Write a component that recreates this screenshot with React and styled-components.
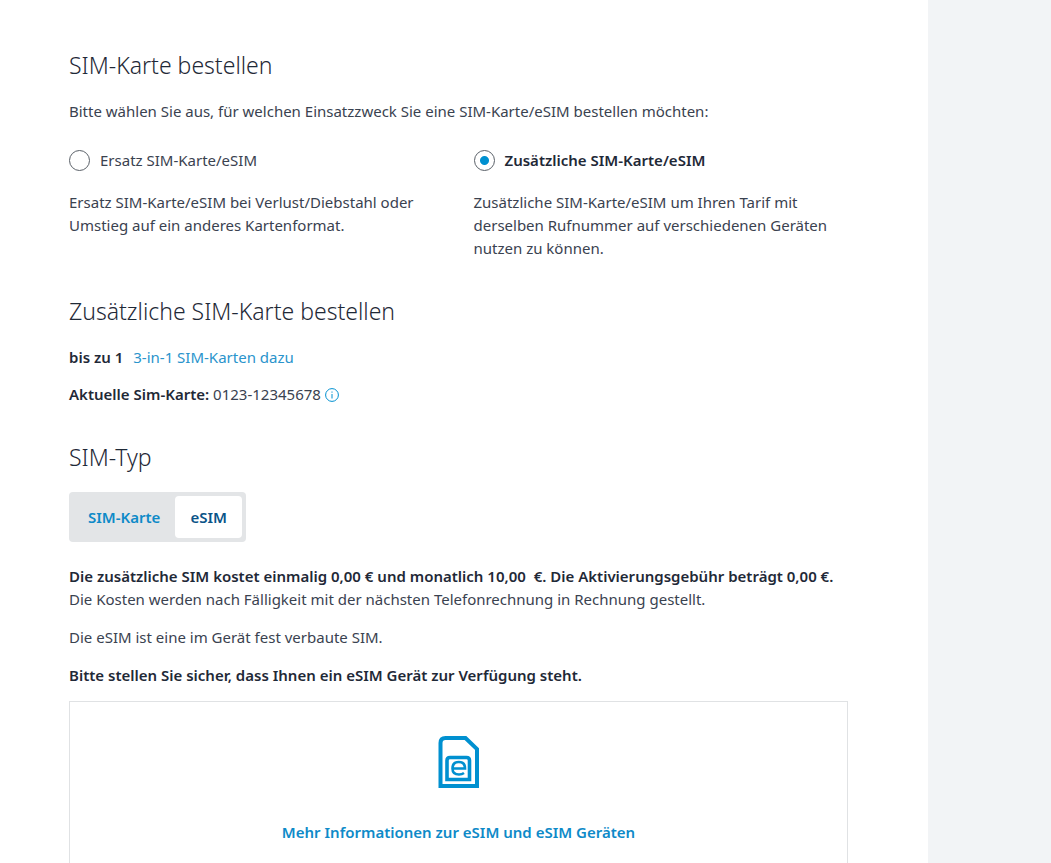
import React, { useState } from 'react';
import styled, { createGlobalStyle } from 'styled-components';

export default function App() {
    const [purpose, setPurpose] = useState('additional');
    const [simType, setSimType] = useState('esim');

    return (
        <Page>
            <GlobalStyle />
            <Main>
                <Section>
                    <Title>SIM-Karte bestellen</Title>
                    <Text>Bitte wählen Sie aus, für welchen Einsatzzweck Sie eine SIM-Karte/eSIM bestellen möchten:</Text>
                    <Options>
                        {purposes.map(({ id, label, description }) => (
                            <div key={id}>
                                <RadioLabel $checked={purpose === id}>
                                    <Radio
                                        name='purpose'
                                        checked={purpose === id}
                                        onChange={() => setPurpose(id)}
                                    />
                                    {label}
                                </RadioLabel>
                                <Text>{description}</Text>
                            </div>
                        ))}
                    </Options>
                </Section>

                <Section>
                    <Title>Zusätzliche SIM-Karte bestellen</Title>
                    <SimLine>
                        <b>bis zu 1</b>
                        <a href='#sim-karten'>3-in-1 SIM-Karten dazu</a>
                    </SimLine>
                    <CurrentSim>
                        <span><b>Aktuelle Sim-Karte:</b> 0123-12345678</span>
                        <InfoButton type='button' aria-label='Information'>
                            <InfoIcon />
                        </InfoButton>
                    </CurrentSim>
                </Section>

                <Title>SIM-Typ</Title>
                <Toggle>
                    <ToggleButton type='button' $active={simType === 'sim'} onClick={() => setSimType('sim')}>
                        SIM-Karte
                    </ToggleButton>
                    <ToggleButton type='button' $active={simType === 'esim'} onClick={() => setSimType('esim')}>
                        eSIM
                    </ToggleButton>
                </Toggle>

                <Costs>
                    <Text>
                        <b>Die zusätzliche SIM kostet einmalig 0,00 € und monatlich 10,00 &nbsp;€. Die Aktivierungsgebühr beträgt 0,00 €.</b>
                        <br />
                        Die Kosten werden nach Fälligkeit mit der nächsten Telefonrechnung in Rechnung gestellt.
                    </Text>
                    <Text>Die eSIM ist eine im Gerät fest verbaute SIM.</Text>
                    <Text><b>Bitte stellen Sie sicher, dass Ihnen ein eSIM Gerät zur Verfügung steht.</b></Text>
                </Costs>

                <InfoCard>
                    <EsimIcon />
                    <CardLink href='#esim'>Mehr Informationen zur eSIM und eSIM Geräten</CardLink>
                </InfoCard>
            </Main>
        </Page>
    );
}

const purposes = [
    {
        id: 'replacement',
        label: 'Ersatz SIM-Karte/eSIM',
        description: 'Ersatz SIM-Karte/eSIM bei Verlust/Diebstahl oder Umstieg auf ein anderes Kartenformat.',
    },
    {
        id: 'additional',
        label: 'Zusätzliche SIM-Karte/eSIM',
        description: 'Zusätzliche SIM-Karte/eSIM um Ihren Tarif mit derselben Rufnummer auf verschiedenen Geräten nutzen zu können.',
    },
];

function InfoIcon() {
    return (
        <svg width='14' height='14' viewBox='0 0 14 14' fill='none' stroke='#0090D0'>
            <circle cx='7' cy='7' r='6.4' />
            <path d='M7 6v4.5M7 3.5v1.2' />
        </svg>
    );
}

function EsimIcon() {
    return (
        <svg width='42' height='54' viewBox='0 0 42 54' fill='none' stroke='#0090D0' strokeWidth='4'>
            <path d='M2.500 51V8q0-5 5-5h20l11.500 11v37z' />
            <path d='M9 44.500V25.500q0-3 3-3h16.500q3 0 3 3v19z' strokeWidth='3.600' />
            <path d='M14.500 33.500h12.500q0-6.500-6.200-6.500t-6.300 6.500q0 6 6.500 6 3 0 5-1.500' strokeWidth='2.600' />
        </svg>
    );
}

const GlobalStyle = createGlobalStyle`
    * { box-sizing: border-box; }

    body {
        margin: 0;
        background-color: #F2F4F6;
        color: #3A4250;
        font-family: 'Noto Sans', 'Open Sans', sans-serif;
        font-size: 15px;
        font-weight: 400;
        line-height: 23px;
    }

    a {
        color: #2A94CC;
        text-decoration: none;
    }

    b {
        color: #1F2937;
        font-weight: 600;
    }
`;

const Page = styled.div`
    display: flex;
    min-height: 100vh;
    padding-right: 123px;

    @media (max-width: 800px) { padding-right: 0; }
`;

const Main = styled.main`
    flex: 1;
    display: flex;
    flex-direction: column;
    padding: 48px 80px 0 69px;
    background-color: #FFF;

    @media (max-width: 800px) { padding: 24px 20px 0; }
`;

const Section = styled.section`
    margin-bottom: 34px;
`;

const Title = styled.h2`
    margin: 0 0 18px;
    color: #1F2937;
    font-size: 23px;
    font-weight: 300;
    line-height: 34px;
`;

const Text = styled.p`
    margin: 0;
`;

const Options = styled.div`
    display: grid;
    grid-template-columns: 1fr 1fr;
    gap: 30px;
    margin-top: 26px;

    @media (max-width: 600px) { grid-template-columns: 1fr; }
`;

const RadioLabel = styled.label`
    display: flex;
    align-items: center;
    gap: 10px;
    margin-bottom: 19px;
    color: ${({ $checked }) => $checked ? '#1F2937' : 'inherit'};
    font-weight: ${({ $checked }) => $checked ? 600 : 400};
    cursor: pointer;
`;

const Radio = styled.input.attrs({ type: 'radio' })`
    appearance: none;
    width: 21px;
    height: 21px;
    margin: 0;
    border: 1px solid #5A6068;
    border-radius: 50%;
    background-color: #FFF;

    &:checked { background-image: radial-gradient(circle, #0090D0 4px, transparent 5px); }
`;

const SimLine = styled.div`
    display: flex;
    gap: 10px;
    margin-bottom: 14px;
`;

const CurrentSim = styled.div`
    display: flex;
    align-items: center;
    gap: 4px;
`;

const InfoButton = styled.button`
    display: flex;
    padding: 0;
    border: none;
    background: none;
    cursor: pointer;
`;

const Toggle = styled.div`
    display: flex;
    align-self: flex-start;
    height: 50px;
    padding: 4px;
    border-radius: 4px;
    background-color: #E3E5E7;
`;

const ToggleButton = styled.button`
    padding: 0 15px;
    border: none;
    border-radius: 4px;
    background-color: ${({ $active }) => $active ? '#FFF' : 'transparent'};
    color: ${({ $active }) => $active ? '#0A5488' : '#0E8AC8'};
    font: inherit;
    font-weight: 600;
    cursor: pointer;
`;

const Costs = styled.div`
    display: flex;
    flex-direction: column;
    gap: 15px;
    margin: 23px 0 14px;
`;

const InfoCard = styled.div`
    flex: 1;
    display: flex;
    flex-direction: column;
    align-items: center;
    gap: 32px;
    padding: 33px 20px 18px;
    border: 1px solid #E0E2E4;
    border-bottom: none;
`;

const CardLink = styled.a`
    color: #0E8AC8;
    font-weight: 600;
`;
